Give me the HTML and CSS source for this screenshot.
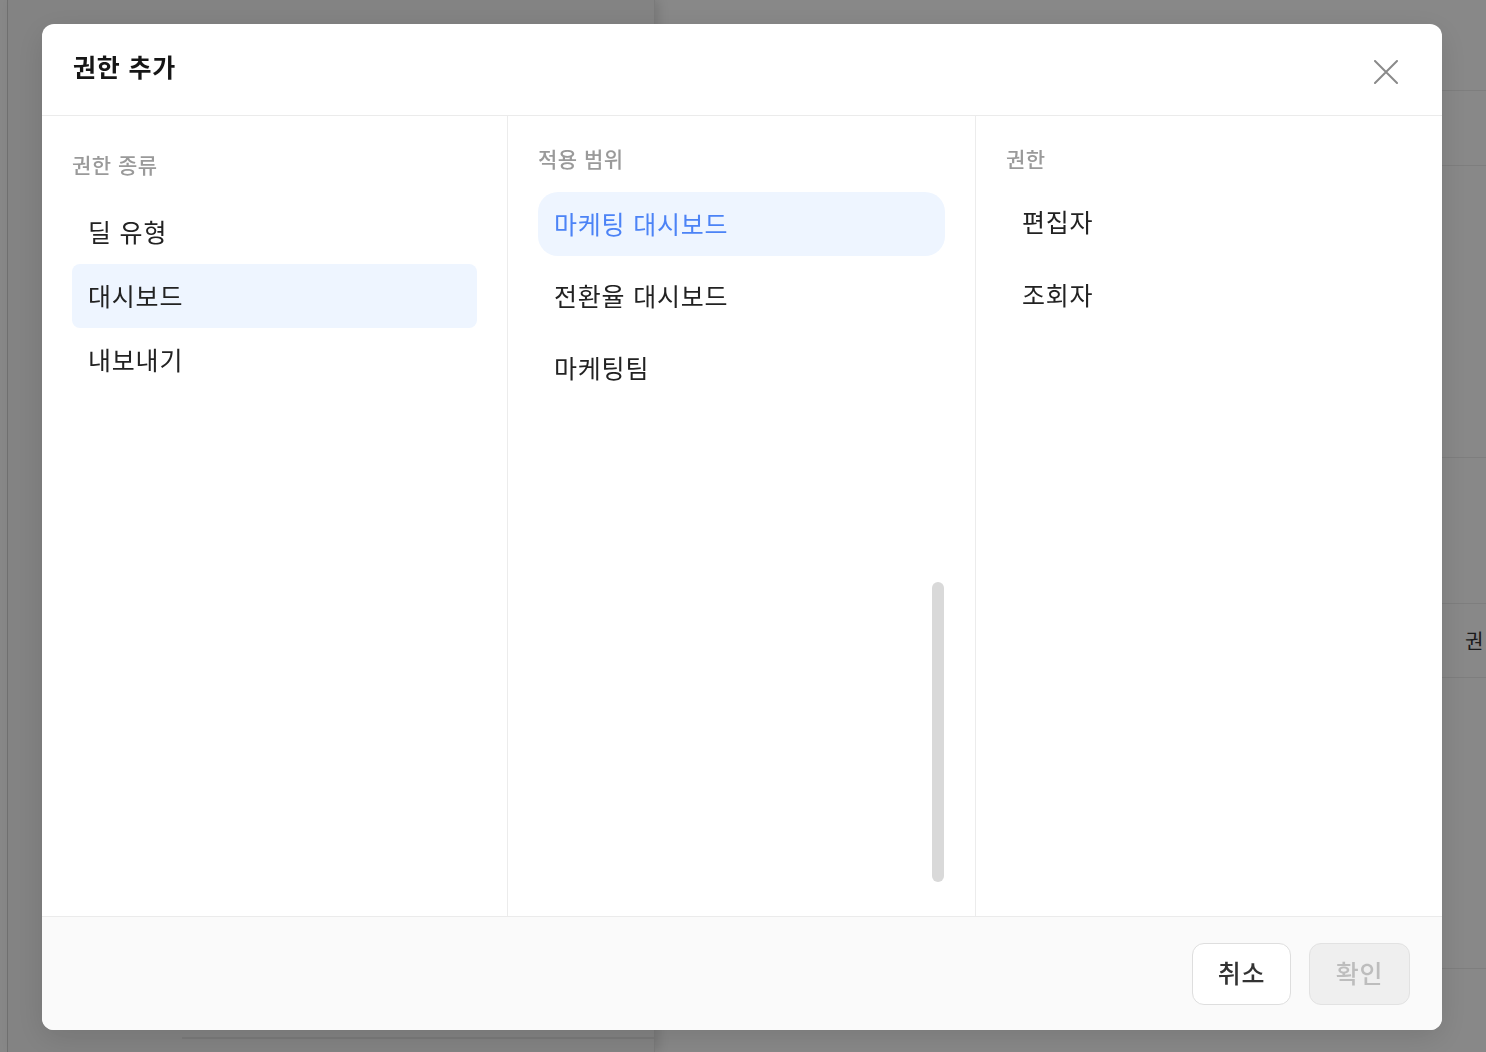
FILE: index.html
```html
<!DOCTYPE html>
<html lang="ko">
<head>
<meta charset="utf-8">
<title>권한 추가</title>
<link rel="stylesheet" href="styles.css">
</head>
<body>
<div class="page">
  <div class="rail"></div>
  <aside class="panel">
    <div class="panel-fill"></div>
    <div class="panel-rule"></div>
  </aside>
  <main class="main">
    <div class="row r1"></div>
    <div class="row r2"></div>
    <div class="row r3"></div>
    <div class="row r4"></div>
    <div class="row r5"><span class="row-text">권</span></div>
    <div class="row r6"></div>
    <div class="row r7"></div>
  </main>
</div>

<div class="overlay">
  <section class="modal" role="dialog" aria-labelledby="modal-title">
    <header class="modal-head">
      <h2 id="modal-title" class="modal-title">권한 추가</h2>
      <button class="close" aria-label="닫기">
        <svg width="24" height="24" viewBox="0 0 24 24" fill="none" stroke="currentColor" stroke-width="2" stroke-linecap="round">
          <path d="M1 1 L23 23 M23 1 L1 23"/>
        </svg>
      </button>
    </header>

    <div class="modal-body">
      <div class="col col-type">
        <div class="col-label">권한 종류</div>
        <ul class="list list-flat">
          <li class="item">딜 유형</li>
          <li class="item is-active">대시보드</li>
          <li class="item">내보내기</li>
        </ul>
      </div>

      <div class="col col-scope">
        <div class="col-label">적용 범위</div>
        <ul class="list list-pill">
          <li class="item is-selected">마케팅 대시보드</li>
          <li class="item">전환율 대시보드</li>
          <li class="item">마케팅팀</li>
        </ul>
        <div class="scroll-thumb"></div>
      </div>

      <div class="col col-role">
        <div class="col-label">권한</div>
        <ul class="list list-pill list-role">
          <li class="item">편집자</li>
          <li class="item">조회자</li>
        </ul>
      </div>
    </div>

    <footer class="modal-foot">
      <button class="btn btn-cancel">취소</button>
      <button class="btn btn-confirm" disabled>확인</button>
    </footer>
  </section>
</div>
</body>
</html>
```

FILE: styles.css
```css
* {
  box-sizing: border-box;
}

html, body {
  margin: 0;
  height: 100%;
}

body {
  font-family: "Noto Sans CJK KR", "Noto Sans", sans-serif;
  background: #ffffff;
  overflow: hidden;
}

/* underlying page */
.page {
  display: flex;
  height: 100vh;
}

.rail {
  width: 8px;
  flex: none;
  border-right: 1px solid #d6d6d6;
  background: #fdfdfd;
}

.panel {
  width: 647px;
  flex: none;
  display: flex;
  flex-direction: column;
  background: #f6f6f6;
  box-shadow: 4px 0 10px rgba(0, 0, 0, 0.12);
  border-right: 1px solid #e4e4e4;
  position: relative;
  z-index: 1;
}

.panel-fill {
  flex: 1;
}

.panel-rule {
  height: 2px;
  margin: 0 0 13px 174px;
  background: #e6e6e6;
}

.main {
  flex: 1;
  display: flex;
  flex-direction: column;
  background: #ffffff;
}

.row {
  border-bottom: 1px solid #ececec;
  display: flex;
  align-items: center;
}

.r1 { height: 91px; }
.r2 { height: 75px; }
.r3 { height: 292px; }
.r4 { height: 146px; }
.r5 { height: 74px; }
.r6 { height: 291px; }
.r7 { flex: 1; border-bottom: none; }

.row-text {
  padding-left: 810px;
  font-size: 20px;
  color: #333;
  white-space: nowrap;
}

/* dimmed overlay + dialog */
.overlay {
  position: fixed;
  inset: 0;
  background: rgba(0, 0, 0, 0.465);
  display: flex;
  align-items: center;
  justify-content: center;
  z-index: 10;
}

.modal {
  width: 1400px;
  height: 1006px;
  margin: 2px 2px 0 0;
  background: #ffffff;
  border-radius: 12px;
  overflow: hidden;
  display: flex;
  flex-direction: column;
  box-shadow: 0 8px 30px rgba(0, 0, 0, 0.12);
}

.modal-head {
  height: 92px;
  flex: none;
  display: flex;
  align-items: center;
  justify-content: space-between;
  padding: 0 44px 0 31px;
  border-bottom: 1px solid #ebebeb;
}

.modal-title {
  margin: 0 0 8px;
  font-size: 25px;
  font-weight: 700;
  color: #161616;
  letter-spacing: 0.8px;
}

.close {
  width: 24px;
  height: 24px;
  padding: 0;
  margin-top: 4px;
  border: none;
  background: none;
  color: #8a8a8a;
  display: flex;
}

.modal-body {
  flex: 1;
  display: grid;
  grid-template-columns: 466px 468px 1fr;
  min-height: 0;
}

.col {
  position: relative;
  padding: 28px 30px 0;
  border-right: 1px solid #ececec;
}

.col:last-child {
  border-right: none;
}

.col-type {
  padding-top: 34px;
}

.col-label {
  height: 28px;
  line-height: 28px;
  font-size: 21px;
  color: #9a9a9a;
  font-weight: 500;
  letter-spacing: 0.5px;
}

.list {
  list-style: none;
  margin: 0;
  padding: 0;
  display: flex;
  flex-direction: column;
}

.item {
  height: 64px;
  display: flex;
  align-items: center;
  padding: 0 16px 3px;
  font-size: 25px;
  color: #222222;
  white-space: nowrap;
  letter-spacing: 0.8px;
}

.list-flat {
  margin-top: 22px;
}

.list-flat .item {
  border-radius: 8px;
}

.list-flat .item.is-active {
  background: #eef5ff;
}

.list-pill {
  margin-top: 20px;
  gap: 8px;
}

.list-pill .item {
  border-radius: 20px;
}

.list-pill .item.is-selected {
  background: #eef5ff;
  color: #4c83f6;
}

.list-role {
  margin-top: 18px;
  gap: 9px;
}

.scroll-thumb {
  position: absolute;
  right: 31px;
  top: 466px;
  width: 12px;
  height: 300px;
  border-radius: 6px;
  background: #d9d9d9;
}

.modal-foot {
  height: 114px;
  flex: none;
  display: flex;
  align-items: center;
  justify-content: flex-end;
  gap: 18px;
  padding: 0 32px 0 0;
  background: #fafafa;
  border-top: 1px solid #ebebeb;
}

.btn {
  height: 62px;
  padding: 0 0 3px;
  border-radius: 12px;
  font-family: inherit;
  font-size: 25px;
  font-weight: 500;
  letter-spacing: 0.8px;
  display: flex;
  align-items: center;
  justify-content: center;
}

.btn-cancel {
  width: 99px;
  background: #ffffff;
  border: 1.5px solid #dedede;
  color: #333333;
}

.btn-confirm {
  width: 101px;
  background: #efefef;
  border: 1.5px solid #e2e2e2;
  color: #bdbdbd;
}
```
